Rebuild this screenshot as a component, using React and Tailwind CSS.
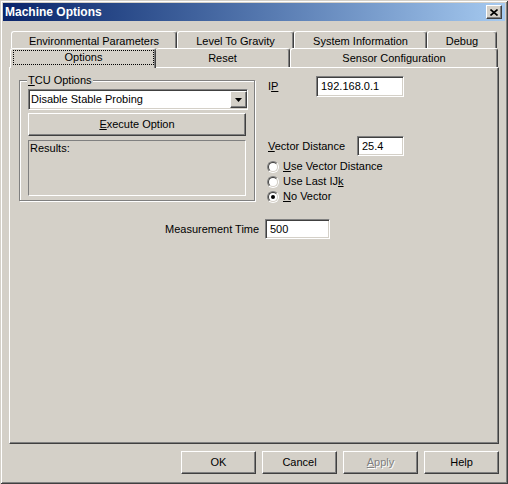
const raised =
  'border border-t-white border-l-white border-r-[#404040] border-b-[#404040] shadow-[inset_-1px_-1px_#808080,inset_1px_1px_#d4d0c8]'
const sunken =
  'border border-t-[#808080] border-l-[#808080] border-r-white border-b-white shadow-[inset_1px_1px_#404040,inset_-1px_-1px_#d4d0c8]'

function BackTab({ className, children }) {
  return (
    <div
      className={`h-[17px] border-t border-l border-r border-t-white border-l-white border-r-[#404040] shadow-[inset_-1px_0_#808080] rounded-t-[3px] flex items-center justify-center pt-[3px] ${className}`}
    >
      {children}
    </div>
  )
}

function Radio({ checked, children }) {
  return (
    <div className="h-[15px] flex items-center gap-[4px] -ml-px">
      <div className="w-[12px] h-[12px] rounded-full border border-t-[#808080] border-l-[#808080] border-b-white border-r-white">
        <div className="w-full h-full rounded-full border border-t-[#404040] border-l-[#404040] border-b-[#d4d0c8] border-r-[#d4d0c8] bg-white flex items-center justify-center">
          {checked && <div className="w-[4px] h-[4px] rounded-full bg-black" />}
        </div>
      </div>
      <span>{children}</span>
    </div>
  )
}

function Btn({ children, disabled }) {
  return (
    <div
      className={`w-[75px] h-[23px] flex items-center justify-center ${raised} ${
        disabled ? 'text-[#808080] [text-shadow:1px_1px_0_#fff]' : ''
      }`}
    >
      {children}
    </div>
  )
}

export default function App() {
  return (
    <div className="w-[508px] h-[484px] bg-[#d4d0c8] p-[3px] flex flex-col text-[11px] leading-[13px] text-black font-['Liberation_Sans',Arial,sans-serif] shadow-[inset_1px_1px_#d4d0c8,inset_-1px_-1px_#404040,inset_2px_2px_#fff,inset_-2px_-2px_#808080]">
      {/* ── Title bar ── */}
      <div className="h-[18px] shrink-0 flex items-center justify-between pl-[2px] pr-[3px] bg-gradient-to-r from-[#0a246a] to-[#a6caf0]">
        <span className="text-white font-bold text-[12px]">Machine Options</span>
        <div className={`w-[16px] h-[14px] bg-[#d4d0c8] flex items-center justify-center ${raised}`}>
          <svg width="8" height="7" viewBox="0 0 8 7">
            <path d="M0.5 0.5 L7.5 6.5 M7.5 0.5 L0.5 6.5" stroke="#000" strokeWidth="1.6" />
          </svg>
        </div>
      </div>

      {/* ── Tabs ── */}
      <div className="mt-[10px] flex ml-[8px]">
        <BackTab className="w-[166px]">Environmental Parameters</BackTab>
        <BackTab className="w-[117px]">Level To Gravity</BackTab>
        <BackTab className="w-[133px]">System Information</BackTab>
        <BackTab className="w-[70px]">Debug</BackTab>
      </div>
      <div className="flex items-end h-[19px] ml-[7px]">
        <div className="w-[146px] h-[20px] -mb-px relative z-10 bg-[#d4d0c8] border-t border-l border-r border-t-white border-l-white border-r-[#404040] shadow-[inset_-1px_0_#808080] rounded-t-[3px] pt-[1px] pl-[2px] pr-[1px] pb-[3px]">
          <div className="w-full h-full border border-dotted border-black flex items-center justify-center">
            Options
          </div>
        </div>
        <div className="w-[134px] h-[19px] border-t border-r border-t-white border-r-[#404040] shadow-[inset_-1px_0_#808080] rounded-t-[3px] flex items-center justify-center">
          Reset
        </div>
        <div className="w-[208px] h-[19px] border-t border-l border-r border-t-white border-l-white border-r-[#404040] shadow-[inset_-1px_0_#808080] rounded-t-[3px] flex items-center justify-center">
          Sensor Configuration
        </div>
      </div>

      {/* ── Panel ── */}
      <div className="ml-[6px] w-[490px] h-[377px] border border-t-white border-l-white border-r-[#404040] border-b-[#404040] shadow-[inset_-1px_-1px_#808080] flex flex-col">
        <div className="flex items-start h-[136px]">
          {/* TCU Options group */}
          <div className="relative ml-[9px] mt-[12px] w-[236px] h-[121px] border border-[#808080] shadow-[inset_1px_1px_#fff,1px_1px_#fff] px-[8px] pt-[8px]">
            <span className="absolute left-[7px] -top-[7px] px-[1px] bg-[#d4d0c8]">
              <u>T</u>CU Options
            </span>
            <div className={`w-[220px] h-[21px] bg-white flex items-center justify-between pl-[2px] ${sunken}`}>
              <span>Disable Stable Probing</span>
              <div className={`w-[17px] h-[17px] bg-[#d4d0c8] flex items-center justify-center ${raised}`}>
                <svg width="7" height="4" viewBox="0 0 7 4">
                  <polygon points="0,0 7,0 3.5,4" fill="#000" />
                </svg>
              </div>
            </div>
            <div className={`mt-[3px] w-[218px] h-[23px] flex items-center justify-center ${raised}`}>
              <span>
                <u>E</u>xecute Option
              </span>
            </div>
            <div className="mt-[4px] w-[218px] h-[56px] border border-t-[#808080] border-l-[#808080] border-r-white border-b-white pl-[1px] pt-[1px]">
              Results:
            </div>
          </div>

          {/* Right column */}
          <div className="ml-[13px] flex flex-col">
            <div className="mt-[8px] h-[21px] flex items-center">
              <span className="w-[48px]">
                I<u>P</u>
              </span>
              <div className={`w-[88px] h-[21px] bg-white flex items-center pl-[4px] ${sunken}`}>
                192.168.0.1
              </div>
            </div>
            <div className="mt-[39px] h-[20px] flex items-center">
              <span className="w-[89px]">
                <u>V</u>ector Distance
              </span>
              <div className={`w-[47px] h-[20px] bg-white flex items-center pl-[4px] ${sunken}`}>
                25.4
              </div>
            </div>
            <div className="mt-[3px] flex flex-col">
              <Radio>
                <u>U</u>se Vector Distance
              </Radio>
              <Radio>
                Use Last IJ<u>k</u>
              </Radio>
              <Radio checked>
                <u>N</u>o Vector
              </Radio>
            </div>
          </div>
        </div>

        {/* Measurement time */}
        <div className="mt-[15px] ml-[155px] h-[20px] flex items-center">
          <span className="w-[100px]">Measurement Time</span>
          <div className={`w-[65px] h-[20px] bg-white flex items-center pl-[4px] ${sunken}`}>500</div>
        </div>
      </div>

      {/* ── Dialog buttons ── */}
      <div className="mt-[7px] mr-[6px] flex justify-end gap-[6px]">
        <Btn>OK</Btn>
        <Btn>Cancel</Btn>
        <Btn disabled>
          <span>
            <u>A</u>pply
          </span>
        </Btn>
        <Btn>Help</Btn>
      </div>
    </div>
  )
}
